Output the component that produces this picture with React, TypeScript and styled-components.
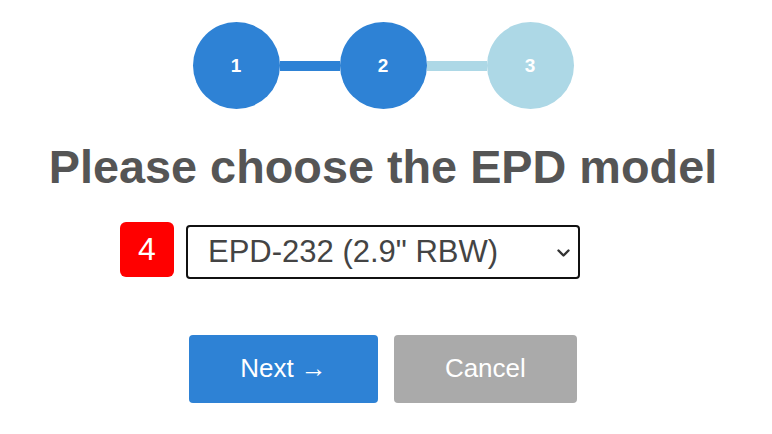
import styled, { createGlobalStyle } from "styled-components";

const GlobalStyle = createGlobalStyle`
  html, body {
    margin: 0;
    padding: 0;
    background: #ffffff;
    font-family: "Liberation Sans", Arial, sans-serif;
  }
`;

const Page = styled.div`
  width: 766px;
  display: flex;
  flex-direction: column;
  align-items: center;
  padding-top: 22px;
`;

const Stepper = styled.div`
  display: flex;
  align-items: center;
`;

const Step = styled.div<{ $active: boolean }>`
  width: 87px;
  height: 87px;
  border-radius: 50%;
  background: ${(p) => (p.$active ? "#2e82d5" : "#add8e6")};
  color: #ffffff;
  font-weight: bold;
  font-size: 19px;
  display: flex;
  align-items: center;
  justify-content: center;
`;

const Connector = styled.div<{ $active: boolean }>`
  width: 60px;
  height: 10px;
  background: ${(p) => (p.$active ? "#2e82d5" : "#add8e6")};
`;

const Title = styled.h1`
  margin: 32px 0 0;
  font-size: 46.8px;
  line-height: 1.15;
  font-weight: bold;
  color: #555555;
`;

const SelectWrap = styled.div`
  position: relative;
  margin-top: 30px;
`;

const Badge = styled.div`
  position: absolute;
  left: -66px;
  top: -3px;
  width: 54px;
  height: 55px;
  border-radius: 6px;
  background: #ff0000;
  color: #ffffff;
  font-size: 32px;
  display: flex;
  align-items: center;
  justify-content: center;
`;

const ModelSelect = styled.select`
  appearance: none;
  width: 394px;
  height: 54px;
  box-sizing: border-box;
  border: 2px solid #111111;
  border-radius: 4px;
  padding: 0 0 0 20px;
  background: #ffffff;
  color: #444444;
  font-family: "Liberation Sans", Arial, sans-serif;
  font-size: 31px;
`;

const Chevron = styled.svg`
  position: absolute;
  right: 10px;
  top: 24px;
  width: 13px;
  height: 8px;
  pointer-events: none;
`;

const Actions = styled.div`
  display: flex;
  gap: 16px;
  margin-top: 56px;
`;

const Button = styled.button<{ $variant: "primary" | "muted" }>`
  height: 68px;
  padding: 0 51px;
  border: none;
  border-radius: 4px;
  background: ${(p) => (p.$variant === "primary" ? "#2e82d5" : "#aaaaaa")};
  color: #ffffff;
  font-family: "Liberation Sans", Arial, sans-serif;
  font-size: 26px;
  cursor: pointer;
`;

export default function App() {
  return (
    <>
      <GlobalStyle />
      <Page>
        <Stepper>
          <Step $active>1</Step>
          <Connector $active />
          <Step $active>2</Step>
          <Connector $active={false} />
          <Step $active={false}>3</Step>
        </Stepper>
        <Title>Please choose the EPD model</Title>
        <SelectWrap>
          <Badge>4</Badge>
          <ModelSelect defaultValue="epd-232">
            <option value="epd-232">EPD-232 (2.9" RBW)</option>
          </ModelSelect>
          <Chevron viewBox="0 0 13 8">
            <path
              d="M1.5 1.5l5 5 5-5"
              fill="none"
              stroke="#333"
              strokeWidth={2.4}
              strokeLinecap="round"
              strokeLinejoin="round"
            />
          </Chevron>
        </SelectWrap>
        <Actions>
          <Button $variant="primary">Next →</Button>
          <Button $variant="muted">Cancel</Button>
        </Actions>
      </Page>
    </>
  );
}
